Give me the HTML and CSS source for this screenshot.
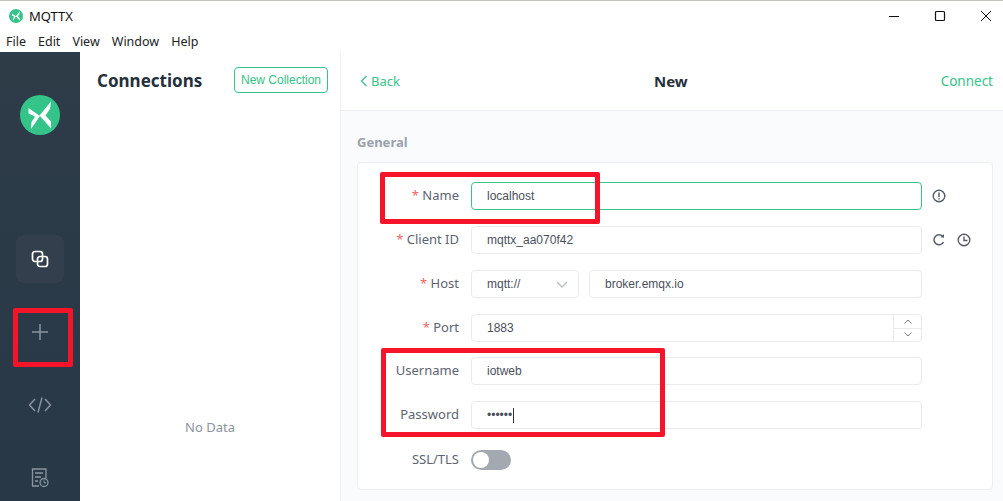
FILE: index.html
```html
<!DOCTYPE html>
<html lang="en">
<head>
<meta charset="utf-8">
<title>MQTTX</title>
<link rel="stylesheet" href="styles.css">
</head>
<body>
<div class="window">
  <header class="titlebar">
    <svg class="app-icon" viewBox="0 0 40 40"><circle cx="20" cy="20" r="20" fill="#34c388"/><path d="M8.500 13 20 21 11 34 11.500 27 15 21.500 8.500 18.500ZM31 6.500 30 14 25.500 20.500 31 26.500 31 33.500 19.500 20.500Z" fill="#fff"/></svg>
    <span class="app-name">MQTTX</span>
    <div class="win-controls">
      <svg viewBox="0 0 12 12"><path d="M1 6.500H11" stroke="#111" fill="none"/></svg>
      <svg viewBox="0 0 12 12"><rect x="1.500" y="1.500" width="9" height="9" rx="1" stroke="#111" stroke-width="1.200" fill="none"/></svg>
      <svg viewBox="0 0 12 12"><path d="M1 1 11 11M11 1 1 11" stroke="#111" fill="none"/></svg>
    </div>
  </header>
  <nav class="menubar">
    <span>File</span><span>Edit</span><span>View</span><span>Window</span><span>Help</span>
  </nav>
  <div class="app">
    <aside class="sidebar">
      <svg class="logo" viewBox="0 0 40 40"><circle cx="20" cy="20" r="20" fill="#34c388"/><path d="M8.500 13 20 21 11 34 11.500 27 15 21.500 8.500 18.500ZM31 6.500 30 14 25.500 20.500 31 26.500 31 33.500 19.500 20.500Z" fill="#fff"/></svg>
      <div class="nav-item active">
        <svg viewBox="0 0 18 18" width="18" height="18"><rect x="1.500" y="1.500" width="10" height="10" rx="2.500" fill="none" stroke="#fff" stroke-width="1.700"/><rect x="6.500" y="6.500" width="10" height="10" rx="2.500" fill="none" stroke="#fff" stroke-width="1.700"/></svg>
      </div>
      <div class="nav-item">
        <svg viewBox="0 0 18 18" width="18" height="18"><path d="M9 1V17M1 9H17" stroke="#8a96a3" stroke-width="1.500" fill="none"/></svg>
      </div>
      <div class="nav-item">
        <svg viewBox="0 0 24 18" width="24" height="18"><path d="M7 3 1.500 9 7 15M17 3 22.500 9 17 15M14 1.500 10 16.500" stroke="#8a96a3" stroke-width="1.400" fill="none"/></svg>
      </div>
      <div class="nav-item">
        <svg viewBox="0 0 18 20" width="18" height="20"><path d="M8 18H1.500V1H15V10M4 5H12M4 9H10M4 13H7" stroke="#8a96a3" stroke-width="1.300" fill="none"/><circle cx="13" cy="14.500" r="4" fill="#2b3b49" stroke="#8a96a3" stroke-width="1.300"/><path d="M13 12.500V14.800H15" stroke="#8a96a3" fill="none"/></svg>
      </div>
    </aside>
    <section class="connections">
      <div class="conn-head">
        <h1>Connections</h1>
        <button class="btn-collection">New Collection</button>
      </div>
      <div class="no-data">No Data</div>
    </section>
    <main class="main">
      <div class="main-head">
        <span class="back"><svg viewBox="0 0 8 12" width="8" height="12"><path d="M6.500 1 1.500 6 6.500 11" stroke="#34c388" stroke-width="1.200" fill="none"/></svg>Back</span>
        <h2>New</h2>
        <span class="connect">Connect</span>
      </div>
      <div class="main-body">
        <div class="section-title">General</div>
        <form class="card">
          <div class="row">
            <label><i>*</i> Name</label>
            <div class="input focus">localhost</div>
            <div class="tail">
              <svg viewBox="0 0 14 14" width="14" height="14"><circle cx="7" cy="7" r="5.800" fill="none" stroke="#555b66" stroke-width="1.400"/><path d="M7 3.500V8M7 9.300V10.500" stroke="#555b66" stroke-width="1.500" fill="none"/></svg>
            </div>
          </div>
          <div class="row">
            <label><i>*</i> Client ID</label>
            <div class="input">mqttx_aa070f42</div>
            <div class="tail">
              <svg viewBox="0 0 14 14" width="14" height="14"><path d="M11.500 9A5 5 0 1 1 10.800 3.500" fill="none" stroke="#555b66" stroke-width="1.500"/><path d="M8.500 4.300 12 4.800 12 1.300Z" fill="#555b66"/></svg>
              <svg viewBox="0 0 14 14" width="14" height="14"><circle cx="7" cy="7" r="5.800" fill="none" stroke="#555b66" stroke-width="1.400"/><path d="M7 3.500V7.500H10.500" stroke="#555b66" stroke-width="1.400" fill="none"/></svg>
            </div>
          </div>
          <div class="row">
            <label><i>*</i> Host</label>
            <div class="input select">mqtt://<svg viewBox="0 0 12 7" width="12" height="7"><path d="M1 1 6 6 11 1" stroke="#b8bcc6" stroke-width="1.400" fill="none"/></svg></div>
            <div class="input">broker.emqx.io</div>
          </div>
          <div class="row">
            <label><i>*</i> Port</label>
            <div class="input port">1883
              <div class="stepper">
                <span><svg viewBox="0 0 8 5" width="8" height="5"><path d="M.5 4.500 4 1 7.500 4.500" stroke="#777" fill="none"/></svg></span>
                <span><svg viewBox="0 0 8 5" width="8" height="5"><path d="M.5.500 4 4 7.500.500" stroke="#777" fill="none"/></svg></span>
              </div>
            </div>
          </div>
          <div class="row row-tight">
            <label>Username</label>
            <div class="input">iotweb</div>
          </div>
          <div class="row">
            <label>Password</label>
            <div class="input"><span class="dots">••••••</span><span class="caret"></span></div>
          </div>
          <div class="row row-loose">
            <label>SSL/TLS</label>
            <div class="switch"><span class="knob"></span></div>
          </div>
        </form>
      </div>
    </main>
  </div>
  <div class="mark mark-name"></div>
  <div class="mark mark-plus"></div>
  <div class="mark mark-user"></div>
</div>
</body>
</html>
```
FILE: styles.css
```css
* { box-sizing: border-box; }
html, body { margin: 0; height: 100%; overflow: hidden; }
body { background: #fff; font-family: "Noto Sans", "Open Sans", sans-serif; color: #2c3a47; }
.window { position: relative; width: 1003px; height: 501px; display: flex; flex-direction: column; overflow: hidden; border-top: 1px solid #c4c4bc; }
.titlebar { height: 29px; flex: none; display: flex; align-items: center; padding-left: 9px; }
.app-icon { width: 14px; height: 14px; }
.app-name { margin-left: 6px; font-size: 13px; color: #111; }
.win-controls { margin-left: auto; display: flex; gap: 34px; padding-right: 11px; }
.win-controls svg { width: 12px; height: 12px; display: block; }
.menubar { height: 22px; flex: none; display: flex; gap: 12px; padding-left: 6px; font-size: 12.500px; line-height: 23px; color: #222; }
.app { flex: 1; display: flex; min-height: 0; }
.sidebar { width: 80px; flex: none; background: linear-gradient(#2e3c48, #283847); display: flex; flex-direction: column; align-items: center; padding-top: 43px; }
.logo { width: 40px; height: 40px; margin-bottom: 100px; flex: none; }
.nav-item { width: 48px; height: 48px; flex: none; display: flex; align-items: center; justify-content: center; margin-bottom: 25px; border-radius: 8px; }
.nav-item.active { background: #343f4d; }
.connections { width: 261px; flex: none; border-right: 1px solid #eef0f5; display: flex; flex-direction: column; }
.conn-head { height: 56px; display: flex; align-items: center; justify-content: space-between; padding: 0 12px 0 17px; }
.conn-head h1 { margin: 0; font-size: 17px; font-weight: 700; color: #25303c; }
.btn-collection { width: 94px; height: 26px; padding: 0; background: #fff; border: 1px solid #34c388; border-radius: 4px; color: #34c388; font: 12px "Liberation Sans", sans-serif; }
.no-data { flex: 1; display: flex; align-items: center; justify-content: center; font-size: 13px; color: #8d939c; padding-top: 244px; }
.main { flex: 1; display: flex; flex-direction: column; min-width: 0; }
.main-head { height: 59px; flex: none; border-bottom: 1px solid #eef0f5; display: flex; align-items: center; justify-content: space-between; position: relative; padding: 0 10px 0 19px; font-size: 13.500px; }
.back { color: #34c388; display: flex; align-items: center; gap: 3px; font-size: 13px; }
.main-head h2 { margin: 0; position: absolute; left: 313px; font-size: 15px; font-weight: 700; color: #25303c; }
.connect { color: #34c388; }
.main-body { flex: 1; background: #fafbfd; padding: 22px 10px 0 16px; min-height: 0; }
.section-title { font-size: 13px; font-weight: 700; color: #9aa1ac; line-height: 18px; margin-bottom: 11px; }
.card { height: 328px; background: #fff; border: 1px solid #eceef4; border-radius: 4px; padding: 19px 0 0 0; display: flex; flex-direction: column; gap: 16px; }
.row { height: 28px; flex: none; display: flex; align-items: center; gap: 8px; padding-right: 70px; position: relative; }
.row-tight { margin-top: -1px; }
.row-loose { margin-top: 1px; }
.row label { width: 101px; flex: none; margin-right: 4px; text-align: right; font-size: 13px; line-height: 26px; padding-bottom: 2px; color: #5d6471; }
.row label i { color: #f26464; font-style: normal; }
.input { flex: 1; min-width: 0; height: 28px; border: 1px solid #e8eaf0; border-radius: 4px; padding-left: 15px; display: flex; align-items: center; font: 12px "Liberation Sans", sans-serif; color: #4a505c; background: #fff; }
.input.focus { border-color: #34c388; }
.select { flex: none; width: 108px; margin-right: 2px; justify-content: space-between; padding-right: 10px; }
.port { position: relative; }
.stepper { position: absolute; right: 0; top: 0; bottom: 0; width: 28px; border-left: 1px solid #e8eaf0; display: flex; flex-direction: column; }
.stepper span { flex: 1; display: flex; align-items: center; justify-content: center; }
.stepper span:first-child { border-bottom: 1px solid #e8eaf0; }
.tail { position: absolute; left: 574px; display: flex; gap: 11px; align-items: center; }
.tail svg { display: block; }
.dots { font-size: 12px; }
.caret { width: 1px; height: 15px; background: #333; margin-left: 1px; }
.switch { width: 40px; height: 20px; border-radius: 10px; background: #a3a8b1; position: relative; }
.knob { position: absolute; left: 2px; top: 2px; width: 16px; height: 16px; border-radius: 50%; background: #fff; }
.mark { position: absolute; border: 5px solid #f5142a; border-radius: 2px; }
.mark-name { left: 380px; top: 171px; width: 220px; height: 52px; }
.mark-plus { left: 13px; top: 307px; width: 60px; height: 59px; }
.mark-user { left: 381px; top: 347px; width: 284px; height: 89px; }
```
